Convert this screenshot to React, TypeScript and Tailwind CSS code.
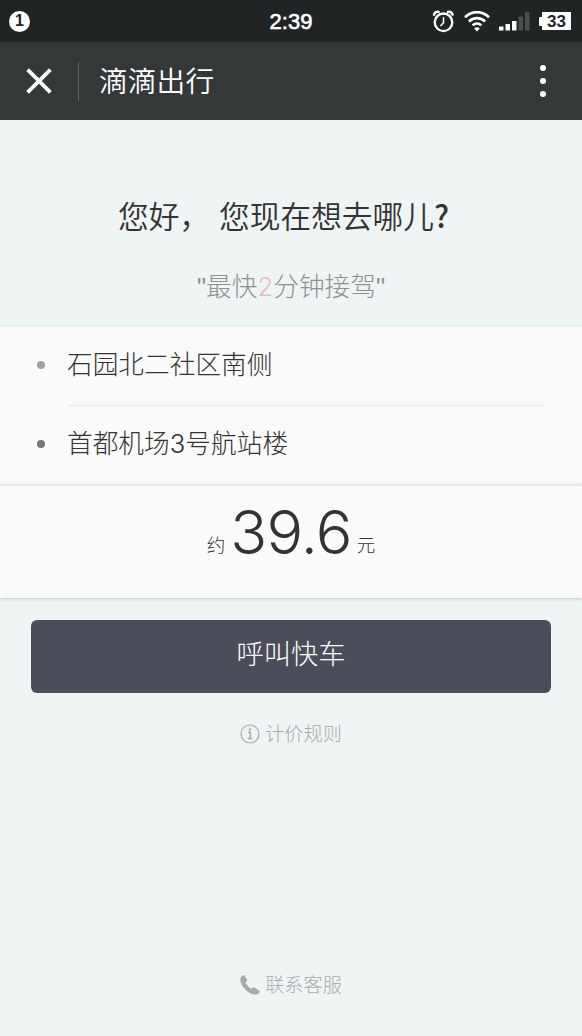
import * as React from "react"

const sans = "font-['Inter','Noto_Sans_CJK_SC',sans-serif]"
const cjk = "font-['Noto_Sans_CJK_SC',sans-serif]"

function AlarmIcon() {
  return (
    <svg width="22" height="23" viewBox="0 0 22 23" fill="none" stroke="#fff" strokeLinecap="round">
      <circle cx="11.5" cy="12.3" r="8.8" strokeWidth="2.4" />
      <path d="M11.5 7.8v5l-2.6 2.7" strokeWidth="1.6" />
      <path d="M2 4.7C2.6 2.6 4.6 1.5 6.6 1.9M20.6 4.7C20 2.6 18 1.5 16 1.9" strokeWidth="2.4" />
    </svg>
  )
}

function WifiIcon() {
  return (
    <svg width="26" height="21" viewBox="0 0 26 21" fill="none" stroke="#fff" strokeWidth="2.6">
      <path d="M1 6.2C8-.6 18-.6 25 6.2" />
      <path d="M4.9 10.5c4.7-4.5 11.5-4.5 16.2 0" />
      <path d="M8.6 14.4c2.6-2.4 6.2-2.4 8.8 0" />
      <path d="M10.2 17.4c1.6-1.5 4-1.5 5.6 0L13 20.6z" fill="#fff" stroke="none" />
    </svg>
  )
}

function SignalIcon() {
  return (
    <svg width="31" height="20" viewBox="0 0 31 20" fill="#fff">
      <rect x="0" y="15.5" width="4.5" height="4" />
      <rect x="6.5" y="13" width="4.5" height="6.5" />
      <rect x="13" y="10" width="4.5" height="9.5" />
      <g fill="#4b4d4e">
        <rect x="19.5" y="5.5" width="4.5" height="14" />
        <rect x="26" y="1" width="4.5" height="18.5" />
      </g>
    </svg>
  )
}

function StatusBar() {
  return (
    <div className="grid h-[42px] grid-cols-3 items-center bg-[#212424] text-white">
      <div className="pl-[9px]">
        <div className="flex size-[21px] items-center justify-center rounded-full bg-white font-['Liberation_Sans',sans-serif] text-[16px] font-bold text-[#212424]">
          1
        </div>
      </div>
      <div className="pt-[2px] text-center font-['Liberation_Sans',sans-serif] text-[22px] leading-none [-webkit-text-stroke:0.6px_white]">
        2:39
      </div>
      <div className="flex items-center justify-end pr-[11px]">
        <AlarmIcon />
        <div className="ml-[10px] mr-[9px]">
          <WifiIcon />
        </div>
        <SignalIcon />
        <div className="ml-[9px] flex items-center">
          <div className="h-[9px] w-[3px] rounded-l-[1px] bg-white" />
          <div className="flex h-[18px] w-[29px] items-center justify-center bg-white pt-px font-['Liberation_Sans',sans-serif] text-[17px] font-bold leading-none text-[#212424]">
            33
          </div>
        </div>
      </div>
    </div>
  )
}

function TitleBar() {
  return (
    <div className="flex h-[78px] items-center bg-[#353839] text-white">
      <svg className="ml-[26px]" width="26" height="26" viewBox="0 0 26 26" stroke="#fff" strokeWidth="3.8">
        <path d="M1.6 1.6l22.8 22.8M24.4 1.6L1.6 24.4" />
      </svg>
      <div className="ml-[26px] h-[39px] w-px bg-[#606364]" />
      <h1 className={`${cjk} ml-5 grow pb-[3px] text-[28.8px] leading-[40px] font-[350]`}>滴滴出行</h1>
      <div className="mr-9 flex flex-col gap-[7px]">
        <div className="size-[6px] rounded-full bg-white" />
        <div className="size-[6px] rounded-full bg-white" />
        <div className="size-[6px] rounded-full bg-white" />
      </div>
    </div>
  )
}

interface PlaceRowProps {
  name: string
  dot: string
}

function PlaceRow({ name, dot }: PlaceRowProps) {
  return (
    <div className="flex h-[78px] items-center pb-[2px]">
      <div className={`ml-[37px] mr-[22px] size-[8px] rounded-full ${dot}`} />
      <div className="text-[25.7px] leading-[38px] text-[#333]">{name}</div>
    </div>
  )
}

interface FooterLinkProps {
  label: string
  className: string
  children: React.ReactNode
}

function FooterLink({ label, className, children }: FooterLinkProps) {
  return (
    <div className={`flex items-center justify-center gap-[5px] text-[19.2px] leading-[28px] text-[#a9abab] ${className}`}>
      {children}
      {label}
    </div>
  )
}

export default function App() {
  return (
    <div className={`${sans} flex h-[1036px] w-[582px] flex-col overflow-hidden bg-[#eff4f4] font-light`}>
      <StatusBar />
      <TitleBar />

      <div className="flex h-[205px] flex-col items-center">
        <h2 className={`${cjk} mt-[73px] mr-[15px] flex gap-[9px] text-[30.7px] leading-[44px] font-[350] text-[#333]`}>
          <span>您好，</span>
          <span>
            您现在想去哪儿<span className="font-medium">?</span>
          </span>
        </h2>
        <p className="mt-[31px] text-[25.7px] leading-[38px] text-[#8f9090]">
          <span className="font-['Liberation_Sans',sans-serif]">"</span>最快<span className="text-[#e0c3b4]">2</span>
          分钟接驾<span className="font-['Liberation_Sans',sans-serif]">"</span>
        </p>
      </div>

      <div className="border-t-2 border-[#e9ecec] bg-[#fafafa]">
        <PlaceRow name="石园北二社区南侧" dot="bg-[#a0a0a0]" />
        <div className="ml-[69px] mr-[38px] h-px bg-[#e7e8e8]" />
        <PlaceRow name="首都机场3号航站楼" dot="bg-[#777]" />
      </div>

      <div className="flex h-[114px] items-baseline justify-center border-t-2 border-[#e9eaea] bg-[#fafafa] text-[#333] shadow-[0_1px_3px_#c4c6c6]">
        <span className="relative -top-[2px] text-[18.5px]">约</span>
        <span className="mx-[5px] text-[61px] leading-[93px] tracking-[-0.8px]">39.6</span>
        <span className="relative -top-[2px] text-[18.5px]">元</span>
      </div>

      <button className={`${cjk} mx-[31px] mt-[22px] h-[73px] shrink-0 rounded-[6px] bg-[#4c4d5a] pb-[8px] text-[27.3px] leading-none text-white`}>
        呼叫快车
      </button>

      <FooterLink label="计价规则" className="mt-[27px]">
        <svg width="20" height="20" viewBox="0 0 20 20" fill="none" stroke="#a9abab" strokeWidth="1.2">
          <circle cx="10" cy="10" r="9" />
          <path d="M8 8.3h2.3v6M7.8 14.4h4.6" strokeWidth="1.5" />
          <circle cx="10" cy="5.4" r="1.2" fill="#a9abab" stroke="none" />
        </svg>
      </FooterLink>

      <FooterLink label="联系客服" className="mt-auto mb-[37px]">
        <svg width="20" height="20" viewBox="0 0 20 20" fill="#a9abab">
          <path d="M2.3.8C3.3.1 4.2.2 4.7 1l2.2 3.3c.5.8.3 1.5-.3 2.1L5.4 7.6c1.3 2.6 3.2 4.7 5.9 6.1l1.6-1c.7-.5 1.4-.5 2.1 0l3.9 2.7c.8.6.9 1.3.4 2.1-1.5 2.4-4.4 2.5-7 1.5C6.7 16.8 2.7 12.6.8 7.2.1 4.8.2 2.3 2.3.8z" />
        </svg>
      </FooterLink>
    </div>
  )
}
